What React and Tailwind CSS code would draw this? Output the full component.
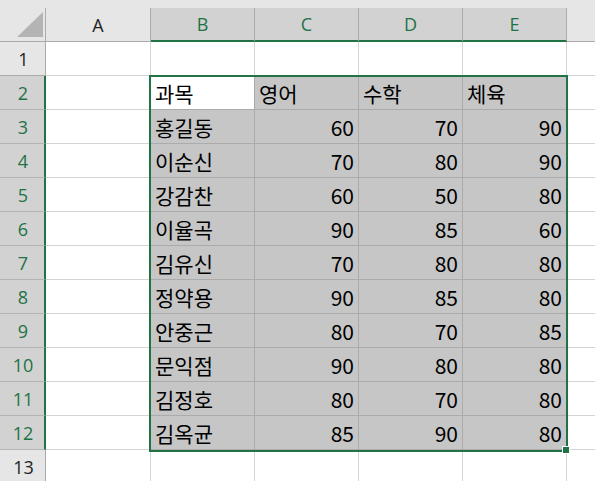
import React from "react";

const green = "#217346";

const rows = [
  ["과목", "영어", "수학", "체육"],
  ["홍길동", 60, 70, 90],
  ["이순신", 70, 80, 90],
  ["강감찬", 60, 50, 80],
  ["이율곡", 90, 85, 60],
  ["김유신", 70, 80, 80],
  ["정약용", 90, 85, 80],
  ["안중근", 80, 70, 85],
  ["문익점", 90, 80, 80],
  ["김정호", 80, 70, 80],
  ["김옥균", 85, 90, 80],
];

function ColHeader({ label, active }) {
  if (active) {
    return (
      <div className="flex items-center justify-center bg-[#d2d2d2] border-r border-r-[#ababab] border-b-2 border-b-[#217346] text-[#217346] text-[18px] pt-[1px]">
        {label}
      </div>
    );
  }
  return (
    <div className="flex items-center justify-center bg-[#e6e6e6] border-r border-b border-[#ababab] text-[#222] text-[18px] pt-[1px]">
      {label}
    </div>
  );
}

function RowHeader({ n, active }) {
  return active ? (
    <div className="flex items-center justify-center bg-[#d2d2d2] border-b border-b-[#b4b4b4] border-r-2 border-r-[#217346] text-[#217346] text-[18px] pl-[2px] pt-[2px]">
      {n}
    </div>
  ) : (
    <div className="flex items-center justify-center bg-[#e6e6e6] border-b border-r border-[#ababab] text-[#222] text-[18px] pl-[2px] pt-[2px]">
      {n}
    </div>
  );
}

function Cell({ value, selected, active }) {
  const num = typeof value === "number";
  let cls = "flex items-center px-[4px] pt-[1px] border-r border-b font-['Noto_Sans_CJK_KR',sans-serif] text-[21px] leading-none text-black ";
  if (active) cls += "bg-white border-[#ababab] ";
  else if (selected) cls += "bg-[#c6c6c6] border-[#ababab] ";
  else cls += "bg-white border-[#d4d4d4] ";
  cls += num ? "justify-end" : "justify-start";
  return <div className={cls}>{value}</div>;
}

export default function App() {
  const cells = [];
  for (let r = 1; r <= 13; r++) {
    const inSel = r >= 2 && r <= 12;
    cells.push(<RowHeader key={"h" + r} n={r} active={inSel} />);
    // column A
    cells.push(<Cell key={"a" + r} value="" />);
    for (let c = 0; c < 4; c++) {
      const v = inSel ? rows[r - 2][c] : "";
      cells.push(
        <Cell key={r + "-" + c} value={v} selected={inSel} active={r === 2 && c === 0} />
      );
    }
    cells.push(<div key={"f" + r} className="border-b border-[#d4d4d4] bg-white" />);
  }

  return (
    <div className="relative w-[595px] h-[481px] overflow-hidden bg-white font-['Open_Sans','Noto_Sans',sans-serif]">
      <div className="h-[8px] bg-[#e6e6e6]" />
      <div className="grid grid-cols-[46px_105px_104px_104px_104px_104px_1fr] grid-rows-[34px_repeat(13,34px)]">
        <div className="relative bg-[#e6e6e6] border-r border-b border-[#ababab]">
          <svg width="46" height="34" className="absolute left-0 top-0">
            <polygon points="43,4 43,29 17,29" fill="#b4b4b4" />
          </svg>
        </div>
        <ColHeader label="A" />
        <ColHeader label="B" active />
        <ColHeader label="C" active />
        <ColHeader label="D" active />
        <ColHeader label="E" active />
        <div className="bg-[#e6e6e6] border-b border-[#ababab]" />
        {cells}
      </div>

      {/* selection outline */}
      <div
        className="absolute left-[149px] top-[75px] w-[419px] h-[377px] border-2 pointer-events-none"
        style={{ borderColor: green }}
      />
      <div className="absolute left-[562px] top-[446px] w-[8px] h-[8px] bg-[#217346] border border-white" />
    </div>
  );
}
